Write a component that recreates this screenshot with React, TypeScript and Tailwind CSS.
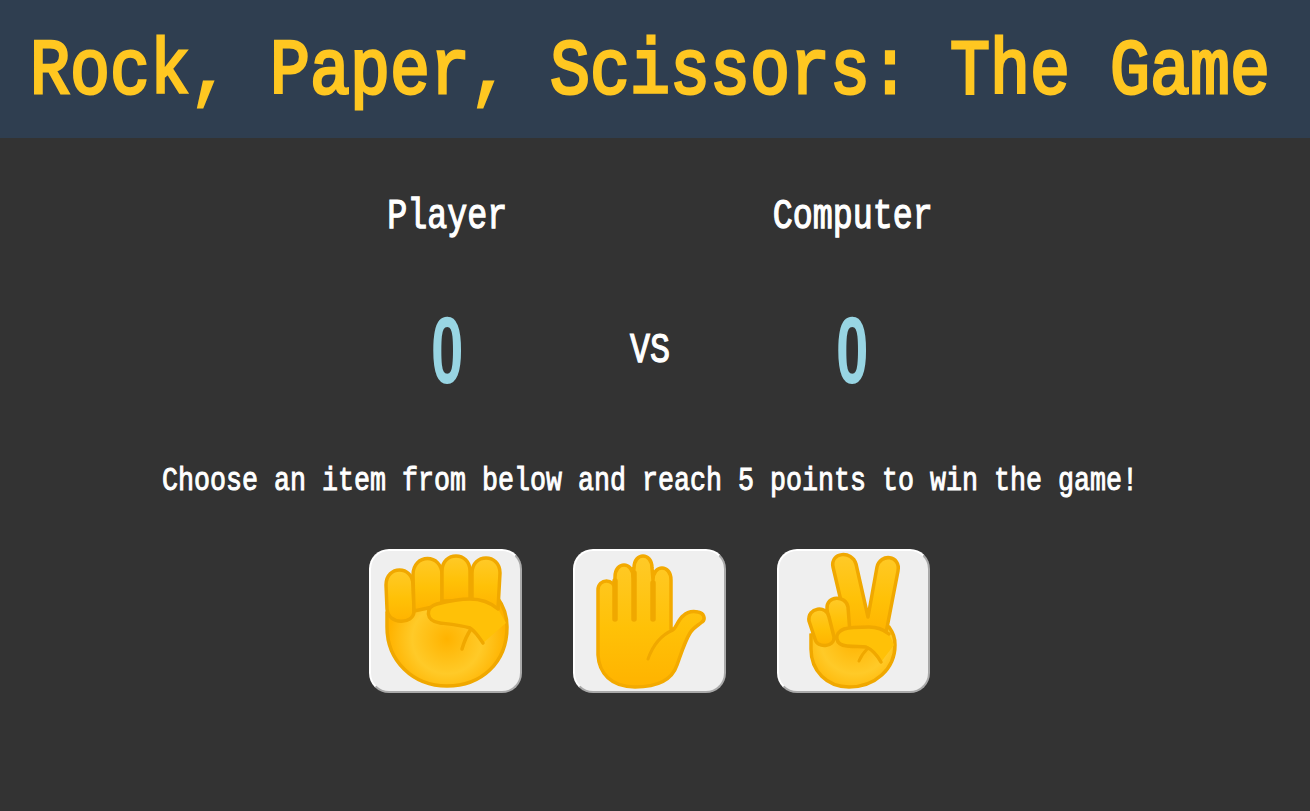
import React from "react";

const HandDefs = () => (
  <svg width="0" height="0" className="absolute">
    <defs>
      <radialGradient id="palm" gradientUnits="userSpaceOnUse" cx="78" cy="90" r="58">
        <stop offset="0" stopColor="#ffb300" />
        <stop offset="0.6" stopColor="#ffca28" />
        <stop offset="1" stopColor="#ffb300" />
      </radialGradient>
      <linearGradient id="flat" x1="0" y1="0" x2="0" y2="1">
        <stop offset="0" stopColor="#ffca28" />
        <stop offset="0.55" stopColor="#ffc107" />
        <stop offset="1" stopColor="#ffb300" />
      </linearGradient>
    </defs>
  </svg>
);

const line = "#f0a800";

const Finger = ({ d }: { d: string }) => (
  <path d={d} fill="url(#flat)" stroke={line} strokeWidth="3.5" strokeLinejoin="round" />
);

const Crease = ({ d, w = 3.5 }: { d: string; w?: number }) => (
  <path d={d} fill="none" stroke={line} strokeWidth={w} strokeLinecap="round" strokeLinejoin="round" />
);

// coordinates are px inside the button, border included
const Rock = () => (
  <svg viewBox="2 2 149 140" className="block h-full w-full">
    <path d="M18 64 L128 48 C134 56 138 66 138 78 C138 114 112 137 78 137 C44 137 18 112 18 78 Z" fill="url(#palm)" stroke={line} strokeWidth="3.5" />
    <Finger d="M18 60 L17 36 C17 16 44 16 44 36 L45 62 C45 76 19 76 18 60 Z" />
    <Finger d="M45 62 L44 26 C44 4 73 4 73 26 L73 56 Z" />
    <Finger d="M73 52 L73 22 C73 2 101 2 101 22 L101 52 Z" />
    <Finger d="M103 52 L103 24 C103 4 131 4 131 24 L129 60 Z" />
    <path d="M68 55 C80 52 92 50 101 50 C112 50 122 54 129 60 L137 74 L114 94 L101 79 C90 76 80 75 71 74 C56 72 54 58 68 55 Z" fill="#ffc107" />
    <Crease d="M129 60 C122 54 112 50 101 50 C92 50 80 52 68 55 C56 58 56 72 71 74 C80 75 92 76 101 79 C106 82 110 88 114 94" />
    <Crease d="M102 80 C98 86 95 93 93 100" />
  </svg>
);

const Paper = () => (
  <svg viewBox="2 2 149 140" className="block h-full w-full">
    <path d="M25 41 C25 29 42 29 42 41 L42 28 C42 12 60 12 60 28 L61 19 C61 3 79 3 79 19 L80 31 C80 15 98 15 98 31 L98 80 L101 80 C104 76 106 70 110 67 C114 63 120 62 125 63 C131 64 133 70 129 73 C124 77 120 79 117 84 C112 92 109 102 104 116 C100 128 88 138 62 138 C38 138 26 124 25 106 Z" fill="url(#flat)" stroke="#f3aa00" strokeWidth="3.5" strokeLinejoin="round" />
    <Crease d="M42 32 L42 70 M61 24 L61 70 M80 34 L80 70" w={5.5} />
    <Crease d="M100 81 C88 86 80 96 75 110" w={3} />
  </svg>
);

const Scissors = () => (
  <svg viewBox="2 2 149 140" className="block h-full w-full">
    <path d="M34 86 L112 78 C116 84 118 88 118 96 C118 120 98 138 72 138 C50 138 34 122 34 100 Z" fill="url(#palm)" stroke={line} strokeWidth="3.5" />
    <Finger d="M56 18 C53 3 75 1 79 15 L91 68 L100 18 C103 4 124 6 121 22 L109 84 L72 86 Z" />
    <Finger d="M50 60 C49 46 69 46 71 58 L73 84 L54 90 Z" />
    <Finger d="M32 72 C30 58 50 56 52 68 L57 88 C58 98 40 100 38 90 Z" />
    <path d="M67 80 C76 78 88 77 94 78 C102 79 108 81 112 85 L117 96 L104 113 L89 98 L70 97 C57 95 56 84 67 80 Z" fill="#ffc107" />
    <Crease d="M112 85 C106 80 98 78 92 78 C84 78 74 78 67 80 C56 84 58 96 70 97 C78 98 84 97 89 98 C94 100 100 106 104 113" />
    <Crease d="M91 99 C87 103 84 107 82 112" w={3} />
  </svg>
);

const ChoiceButton = ({ children, label }: { children: React.ReactNode; label: string }) => (
  <button
    aria-label={label}
    className="h-[144px] w-[153px] overflow-hidden rounded-[20px] border-2 border-t-white border-l-white border-r-[#a9a9a9] border-b-[#a9a9a9] bg-[#efefef]"
  >
    {children}
  </button>
);

const Tall = ({ children, className }: { children: React.ReactNode; className: string }) => (
  <div className={`origin-center scale-y-[1.25] ${className}`}>{children}</div>
);

export default function App() {
  return (
    <div className="flex min-h-[811px] flex-col bg-[#333333] font-['Liberation_Mono',monospace] text-white">
      <HandDefs />
      <header className="flex h-[138px] items-center overflow-hidden bg-[#2f3e50] pr-[10px]">
        <h1 className="mt-[6px] w-full origin-center scale-y-[1.17] text-center text-[66.67px] leading-none font-normal text-[#ffc721] [-webkit-text-stroke:2.5px_#ffc721]">
          Rock, Paper, Scissors: The Game
        </h1>
      </header>

      <main className="flex flex-col items-center pr-[10px]">
        <div className="mt-[58px] grid w-[608px] grid-cols-3 items-center text-center">
          <Tall className="mt-[1px] h-[40px] text-[33.33px] leading-[40px] [-webkit-text-stroke:1px_white]">Player</Tall>
          <div />
          <Tall className="mt-[1px] h-[40px] text-[33.33px] leading-[40px] [-webkit-text-stroke:1px_white]">Computer</Tall>
          <div className="mt-[59px] origin-center scale-x-[0.62] font-['Liberation_Sans',sans-serif] text-[94px] leading-[110px] font-bold text-[#98d5e3]">0</div>
          <Tall className="mt-[59px] text-[33.33px] leading-[110px] [-webkit-text-stroke:1px_white]">VS</Tall>
          <div className="mt-[59px] origin-center scale-x-[0.62] font-['Liberation_Sans',sans-serif] text-[94px] leading-[110px] font-bold text-[#98d5e3]">0</div>
        </div>

        <Tall className="mt-[59px] text-[26.67px] leading-[32px] [-webkit-text-stroke:0.8px_white]">
          Choose an item from below and reach 5 points to win the game!
        </Tall>

        <div className="mt-[52px] flex gap-[51px] pr-[1px]">
          <ChoiceButton label="rock"><Rock /></ChoiceButton>
          <ChoiceButton label="paper"><Paper /></ChoiceButton>
          <ChoiceButton label="scissors"><Scissors /></ChoiceButton>
        </div>
      </main>
    </div>
  );
}
